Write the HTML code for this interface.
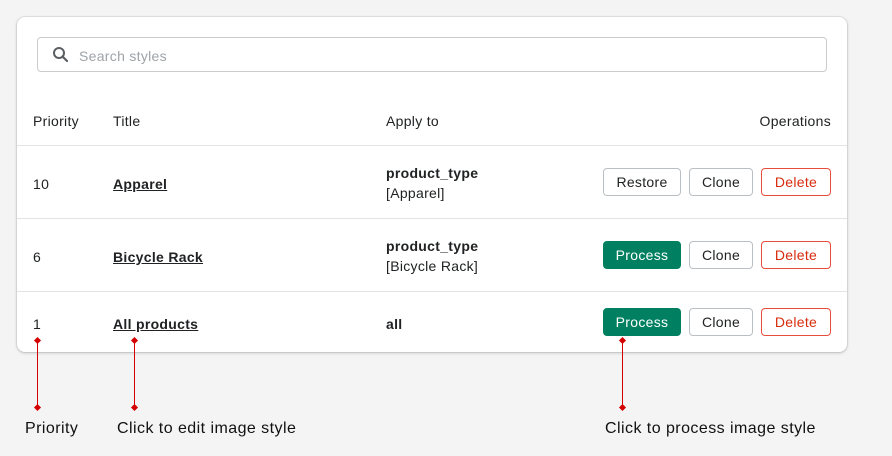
<!DOCTYPE html>
<html><head><style>
body{margin:0;width:892px;height:456px;background:#f4f4f4;font-family:"Liberation Sans",sans-serif;position:relative;overflow:hidden;color:#202223}
.card{position:absolute;left:17px;top:17px;width:830px;height:335px;background:#fff;border-radius:8px;box-shadow:0 0 0 1px rgba(0,0,0,.06),0 1px 3px rgba(0,0,0,.2)}
.search{position:absolute;left:20px;top:20px;width:788px;height:33px;border:1px solid #c9cccf;border-radius:4px}
.search span{position:absolute;left:41px;top:10px;font-size:14px;color:#9ea3a8;letter-spacing:.3px}
.t{position:absolute;font-size:14px;letter-spacing:.3px}
.line{position:absolute;left:0;width:830px;height:1px;background:#e1e3e5}
.b{position:absolute;height:26px;border:1px solid #babfc3;border-radius:4px;font-size:14px;line-height:27px;text-align:center;background:#fff;box-sizing:content-box;letter-spacing:.3px}
.p{background:#008060;border-color:#008060;color:#fff}
.d{border-color:#e84c3d;color:#d72c0d}
a{color:#202223;font-weight:bold;text-decoration:underline}
.v{position:absolute;width:1px;background:#d50000;top:340px;height:68px}
.dot{position:absolute;width:5px;height:5px;background:#d50000;transform:rotate(45deg)}
.lab{position:absolute;top:420px;font-size:16px;color:#111;letter-spacing:.45px}
</style></head><body>
<div class="card">
<div class="search"><svg style="position:absolute;left:14px;top:8px" width="17" height="17" viewBox="0 0 17 17"><circle cx="7" cy="7" r="5" fill="none" stroke="#5c5f62" stroke-width="2"/><path d="M10.5 10.5L15 15" stroke="#5c5f62" stroke-width="2.2" stroke-linecap="round"/></svg><span>Search styles</span></div>
<div class="t" style="left:16px;top:96px">Priority</div>
<div class="t" style="left:96px;top:96px">Title</div>
<div class="t" style="left:369px;top:96px">Apply to</div>
<div class="t" style="right:16px;top:96px">Operations</div>
<div class="line" style="top:128px"></div>
<div class="t" style="left:16px;top:159px">10</div>
<div class="t" style="left:96px;top:159px"><a>Apparel</a></div>
<div class="t" style="left:369px;top:146px;line-height:20px"><b>product_type</b><br>[Apparel]</div>
<div class="b" style="left:586px;top:151px;width:76px">Restore</div>
<div class="b" style="left:672px;top:151px;width:62px">Clone</div>
<div class="b d" style="left:744px;top:151px;width:68px">Delete</div>
<div class="line" style="top:201px"></div>
<div class="t" style="left:16px;top:232px">6</div>
<div class="t" style="left:96px;top:232px"><a>Bicycle Rack</a></div>
<div class="t" style="left:369px;top:219px;line-height:20px"><b>product_type</b><br>[Bicycle Rack]</div>
<div class="b p" style="left:586px;top:224px;width:76px">Process</div>
<div class="b" style="left:672px;top:224px;width:62px">Clone</div>
<div class="b d" style="left:744px;top:224px;width:68px">Delete</div>
<div class="line" style="top:274px"></div>
<div class="t" style="left:16px;top:299px">1</div>
<div class="t" style="left:96px;top:299px"><a>All products</a></div>
<div class="t" style="left:369px;top:299px"><b>all</b></div>
<div class="b p" style="left:586px;top:291px;width:76px">Process</div>
<div class="b" style="left:672px;top:291px;width:62px">Clone</div>
<div class="b d" style="left:744px;top:291px;width:68px">Delete</div>
</div>
<div class="v" style="left:37px"></div><div class="dot" style="left:35px;top:338px"></div><div class="dot" style="left:35px;top:405px"></div>
<div class="v" style="left:134px"></div><div class="dot" style="left:132px;top:338px"></div><div class="dot" style="left:132px;top:405px"></div>
<div class="v" style="left:622px"></div><div class="dot" style="left:620px;top:338px"></div><div class="dot" style="left:620px;top:405px"></div>
<div class="lab" style="left:25px">Priority</div>
<div class="lab" style="left:117px">Click to edit image style</div>
<div class="lab" style="left:605px">Click to process image style</div>
</body></html>
